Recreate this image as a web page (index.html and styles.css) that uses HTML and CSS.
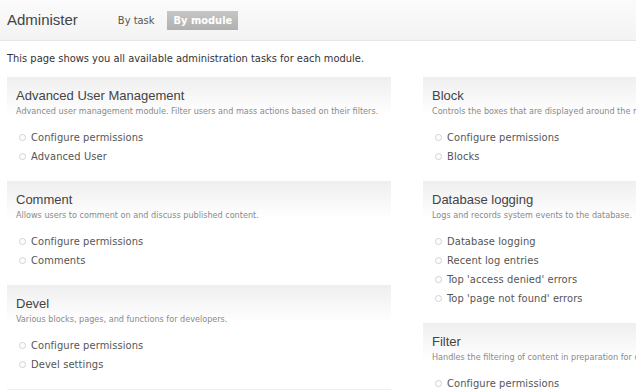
FILE: index.html
```html
<!DOCTYPE html>
<html lang="en">

<head>
  <meta charset="UTF-8" />
  <title>Administer</title>
  <link rel="stylesheet" href="styles.css">
</head>

<body>
  <div class="header">
    <h1>Administer</h1>
    <ul class="tabs">
      <li><a href="#">By task</a></li>
      <li class="active"><a href="#">By module</a></li>
    </ul>
  </div>

  <p class="intro">This page shows you all available administration tasks for each module.</p>

  <div class="columns">
    <div class="column">
      <div class="box">
        <div class="box-head">
          <h3>Advanced User Management</h3>
          <p>Advanced user management module. Filter users and mass actions based on their filters.</p>
        </div>
        <ul class="links">
          <li><a href="#">Configure permissions</a></li>
          <li><a href="#">Advanced User</a></li>
        </ul>
      </div>
      <div class="box">
        <div class="box-head">
          <h3>Comment</h3>
          <p>Allows users to comment on and discuss published content.</p>
        </div>
        <ul class="links">
          <li><a href="#">Configure permissions</a></li>
          <li><a href="#">Comments</a></li>
        </ul>
      </div>
      <div class="box">
        <div class="box-head">
          <h3>Devel</h3>
          <p>Various blocks, pages, and functions for developers.</p>
        </div>
        <ul class="links">
          <li><a href="#">Configure permissions</a></li>
          <li><a href="#">Devel settings</a></li>
        </ul>
      </div>
      <div class="box">
        <div class="box-head">
          <h3>Field</h3>
          <p>Field API to add fields to entities like nodes and users.</p>
        </div>
      </div>
    </div>

    <div class="column">
      <div class="box">
        <div class="box-head">
          <h3>Block</h3>
          <p>Controls the boxes that are displayed around the main content.</p>
        </div>
        <ul class="links">
          <li><a href="#">Configure permissions</a></li>
          <li><a href="#">Blocks</a></li>
        </ul>
      </div>
      <div class="box">
        <div class="box-head">
          <h3>Database logging</h3>
          <p>Logs and records system events to the database.</p>
        </div>
        <ul class="links">
          <li><a href="#">Database logging</a></li>
          <li><a href="#">Recent log entries</a></li>
          <li><a href="#">Top 'access denied' errors</a></li>
          <li><a href="#">Top 'page not found' errors</a></li>
        </ul>
      </div>
      <div class="box">
        <div class="box-head">
          <h3>Filter</h3>
          <p>Handles the filtering of content in preparation for display.</p>
        </div>
        <ul class="links">
          <li><a href="#">Configure permissions</a></li>
          <li><a href="#">Text formats</a></li>
        </ul>
      </div>
    </div>
  </div>
</body>

</html>
```

FILE: styles.css
```css
* {
  box-sizing: border-box;
  margin: 0;
  padding: 0;
}

html {
  overflow: hidden;
}

body {
  font-family: 'DejaVu Sans Condensed', 'DejaVu Sans', sans-serif;
  font-stretch: condensed;
  background: #fff;
  color: #333;
  width: 900px;
}

a {
  text-decoration: none;
  color: inherit;
}

ul {
  list-style: none;
}

.header {
  height: 41px;
  background: linear-gradient(#fbfbfb, #f3f3f3);
  border-bottom: 1px solid #e6e6e6;
  display: flex;
  align-items: center;
  padding: 0 7px;
}

h1 {
  font-family: 'Liberation Sans', Arial, sans-serif;
  font-stretch: normal;
  font-weight: normal;
  font-size: 15px;
  color: #444;
  margin-right: 40px;
  margin-top: -1px;
}

.tabs {
  display: flex;
  gap: 3px;
  font-size: 11px;
  color: #555;
}

.tabs li a {
  display: block;
  height: 19px;
  line-height: 19px;
  padding: 0 10px 0 0;
}

.tabs li.active a {
  padding: 0 6px;
  background: linear-gradient(#c6c6c6, #b0b0b0);
  color: #fff;
  font-weight: bold;
}

.intro {
  font-size: 11px;
  line-height: 14px;
  padding: 11px 7px 0;
}

.columns {
  display: flex;
  gap: 32px;
  padding: 11px 7px 0;
}

.column {
  width: 384px;
  flex: none;
}

.box {
  padding-bottom: 15px;
}

.box-head {
  padding: 10px 9px 0;
  background: linear-gradient(#efefef, #fff 38px);
}

.box-head h3 {
  font-family: 'Liberation Sans', Arial, sans-serif;
  font-stretch: normal;
  font-weight: normal;
  font-size: 13px;
  line-height: 18px;
  color: #444;
}

.box-head p {
  font-size: 9px;
  line-height: 12px;
  color: #8a8a8a;
  white-space: nowrap;
}

.links {
  margin-top: 11px;
  padding-left: 24px;
  font-size: 11px;
  color: #555;
  letter-spacing: 0.1px;
}

.links li {
  line-height: 19px;
  position: relative;
}

.links li::before {
  content: '';
  position: absolute;
  left: -12px;
  top: 6px;
  width: 5px;
  height: 5px;
  border: 1px solid #d0d0d0;
  border-radius: 50%;
}
```
